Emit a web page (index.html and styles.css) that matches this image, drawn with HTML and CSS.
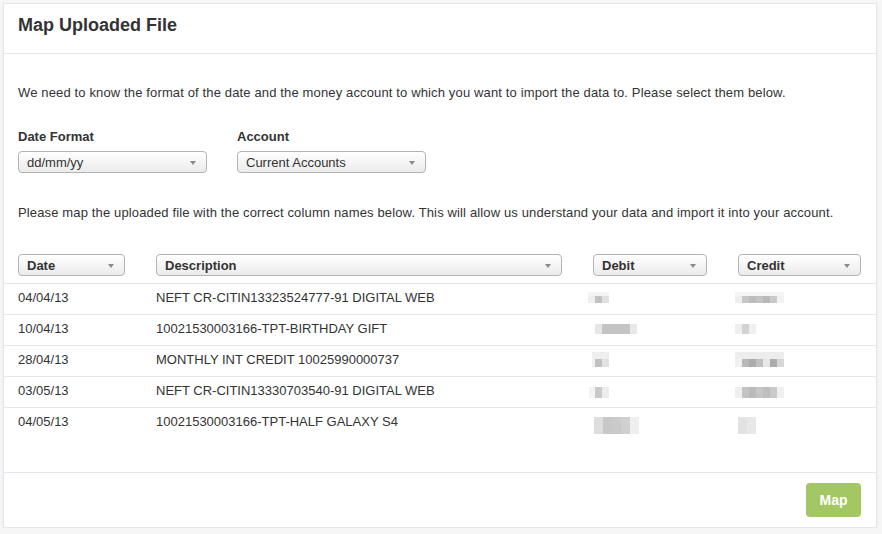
FILE: index.html
```html
<!DOCTYPE html>
<html>
<head>
<meta charset="utf-8">
<link rel="stylesheet" href="styles.css">
</head>
<body>
<div class="card">
  <div class="card-header">
    <h1 class="title">Map Uploaded File</h1>
  </div>
  <div class="card-body">
    <p class="pad intro">We need to know the format of the date and the money account to which you want to import the data to. Please select them below.</p>
    <div class="pad form-row">
      <div class="field">
        <div class="label">Date Format</div>
        <div class="sel"><span>dd/mm/yy</span></div>
      </div>
      <div class="field">
        <div class="label">Account</div>
        <div class="sel"><span>Current Accounts</span></div>
      </div>
    </div>
    <p class="pad intro2">Please map the uploaded file with the correct column names below. This will allow us understand your data and import it into your account.</p>
    <div class="table">
      <div class="pad grid thead">
        <div class="sel sel-b"><span>Date</span></div>
        <div class="sel sel-b"><span>Description</span></div>
        <div class="sel sel-b"><span>Debit</span></div>
        <div class="sel sel-b"><span>Credit</span></div>
      </div>
      <div class="pad grid row">
        <div>04/04/13</div>
        <div>NEFT CR-CITIN13323524777-91 DIGITAL WEB</div>
        <div class="cell"><span class="blob b1d"></span></div>
        <div class="cell"><span class="blob b1c"></span></div>
      </div>
      <div class="pad grid row">
        <div>10/04/13</div>
        <div>10021530003166-TPT-BIRTHDAY GIFT</div>
        <div class="cell"><span class="blob b2d"></span></div>
        <div class="cell"><span class="blob b2c"></span></div>
      </div>
      <div class="pad grid row">
        <div>28/04/13</div>
        <div>MONTHLY INT CREDIT 10025990000737</div>
        <div class="cell"><span class="blob b3d"></span></div>
        <div class="cell"><span class="blob b3c"></span></div>
      </div>
      <div class="pad grid row">
        <div>03/05/13</div>
        <div>NEFT CR-CITIN13330703540-91 DIGITAL WEB</div>
        <div class="cell"><span class="blob b4d"></span></div>
        <div class="cell"><span class="blob b4c"></span></div>
      </div>
      <div class="pad grid row">
        <div>04/05/13</div>
        <div>10021530003166-TPT-HALF GALAXY S4</div>
        <div class="cell"><span class="blob b5d"></span></div>
        <div class="cell"><span class="blob b5c"></span></div>
      </div>
    </div>
  </div>
  <div class="card-footer">
    <button class="btn-map">Map</button>
  </div>
</div>
</body>
</html>
```
FILE: styles.css
```css
html, body {
  margin: 0;
  padding: 0;
}
body {
  background: #f6f6f6;
  font-family: "Liberation Sans", Arial, Helvetica, sans-serif;
  font-size: 13px;
  color: #333;
  padding: 3px 5px 0 3px;
}
.card {
  width: 874px;
  box-sizing: border-box;
  background: #fff;
  border: 1px solid #e3e7ec;
  box-shadow: 0 1px 2px rgba(0, 0, 0, 0.07);
}
.card-header {
  padding: 11px 14px 18px;
  border-bottom: 1px solid #e4e8ee;
}
.title {
  margin: 0;
  font-size: 18px;
  line-height: 20px;
  font-weight: bold;
  color: #333;
}
.card-body {
  padding: 30px 0 34px;
}
.pad {
  padding: 0 15px 0 14px;
}
p {
  margin: 0;
  line-height: 18px;
  letter-spacing: 0.14px;
}
.intro {
  margin-bottom: 26px;
}
.form-row {
  display: flex;
  gap: 30px;
}
.field {
  width: 189px;
}
.label {
  font-weight: bold;
  line-height: 18px;
  margin-bottom: 5px;
}
.sel {
  display: flex;
  align-items: center;
  justify-content: space-between;
  height: 22px;
  box-sizing: border-box;
  border: 1px solid #b3b3b3;
  border-radius: 4px;
  background: linear-gradient(#ffffff, #ebebeb);
  padding: 1px 10px 0 8px;
  font-size: 13px;
  line-height: 20px;
  color: #333;
}
.sel::after {
  content: "";
  width: 0;
  height: 0;
  border-left: 3px solid transparent;
  border-right: 3px solid transparent;
  border-top: 4px solid #8a8a8a;
}
.sel-b {
  font-weight: bold;
  padding-top: 2px;
}
.intro2 {
  margin-top: 31px;
  margin-bottom: 32px;
}
.grid {
  display: grid;
  grid-template-columns: 107px 406px 114px 1fr;
  column-gap: 31px;
}
.thead {
  padding-bottom: 7px;
  border-bottom: 1px solid #e4e6ea;
}
.row {
  height: 31px;
  box-sizing: border-box;
  line-height: 27px;
  padding-bottom: 3px;
  border-bottom: 1px solid #e4e6ea;
}
.row:last-child {
  border-bottom: none;
  height: 30px;
}
.cell {
  position: relative;
}
.blob {
  position: absolute;
  display: block;
}
.b1d {
  left: -5px; top: 8px; width: 21px; height: 11px;
  background: linear-gradient(90deg, #efefef 0 7px, #c2c2c2 7px 14px, #e0e0e0 14px 21px) bottom / 100% 7px no-repeat, #f4f4f4;
}
.b1c {
  left: -3px; top: 8px; width: 49px; height: 11px;
  background: linear-gradient(90deg, #efefef 0 7px, #c6c6c6 7px 14px, #bcbcbc 14px 21px, #c4c4c4 21px 28px, #b9b9b9 28px 35px, #cacaca 35px 42px, #f2f2f2 42px 49px) bottom / 100% 7px no-repeat, #f5f5f5;
}
.b2d {
  left: 2px; top: 9px; width: 42px; height: 10px;
  background: linear-gradient(90deg, #e6e6e6 0 7px, #c4c4c4 7px 35px, #e8e8e8 35px 42px);
}
.b2c {
  left: -3px; top: 9px; width: 21px; height: 10px;
  background: linear-gradient(90deg, #efefef 0 7px, #d2d2d2 7px 14px, #f0f0f0 14px 21px);
}
.b3d {
  left: -1px; top: 6px; width: 17px; height: 15px;
  background: linear-gradient(90deg, #f0f0f0 0 3px, #c1c1c1 3px 10px, #e2e2e2 10px 17px) bottom / 100% 8px no-repeat, #eeeeee;
}
.b3c {
  left: -3px; top: 6px; width: 49px; height: 15px;
  background: linear-gradient(90deg, #f0f0f0 0 7px, #b9b9b9 7px 14px, #ababab 14px 21px, #c0c0c0 21px 28px, #e6e6e6 28px 35px, #acacac 35px 42px, #d6d6d6 42px 49px) bottom / 100% 8px no-repeat, #ededed;
}
.b4d {
  left: -4px; top: 10px; width: 20px; height: 11px;
  background: linear-gradient(90deg, #f3f3f3 0 6px, #c9c9c9 6px 13px, #ececec 13px 20px);
}
.b4c {
  left: -3px; top: 10px; width: 49px; height: 11px;
  background: linear-gradient(90deg, #efefef 0 7px, #c3c3c3 7px 14px, #bababa 14px 21px, #c6c6c6 21px 28px, #bebebe 28px 35px, #c9c9c9 35px 42px, #f0f0f0 42px 49px);
}
.b5d {
  left: 1px; top: 9px; width: 45px; height: 17px;
  background: linear-gradient(90deg, #dedede 0 9px, #c8c8c8 9px 18px, #cacaca 18px 27px, #d0d0d0 27px 36px, #efefef 36px 45px);
}
.b5c {
  left: 0; top: 9px; width: 18px; height: 17px;
  background: linear-gradient(90deg, #e2e2e2 0 9px, #e8e8e8 9px 18px);
}
.card-footer {
  border-top: 1px solid #e4e8ee;
  padding: 10px 15px 10px;
  display: flex;
  justify-content: flex-end;
}
.btn-map {
  height: 34px;
  width: 55px;
  border: none;
  border-radius: 4px;
  background: #a3c762;
  color: #fff;
  font-family: "Liberation Sans", Arial, Helvetica, sans-serif;
  font-size: 14px;
  font-weight: bold;
  padding: 0;
}
```
